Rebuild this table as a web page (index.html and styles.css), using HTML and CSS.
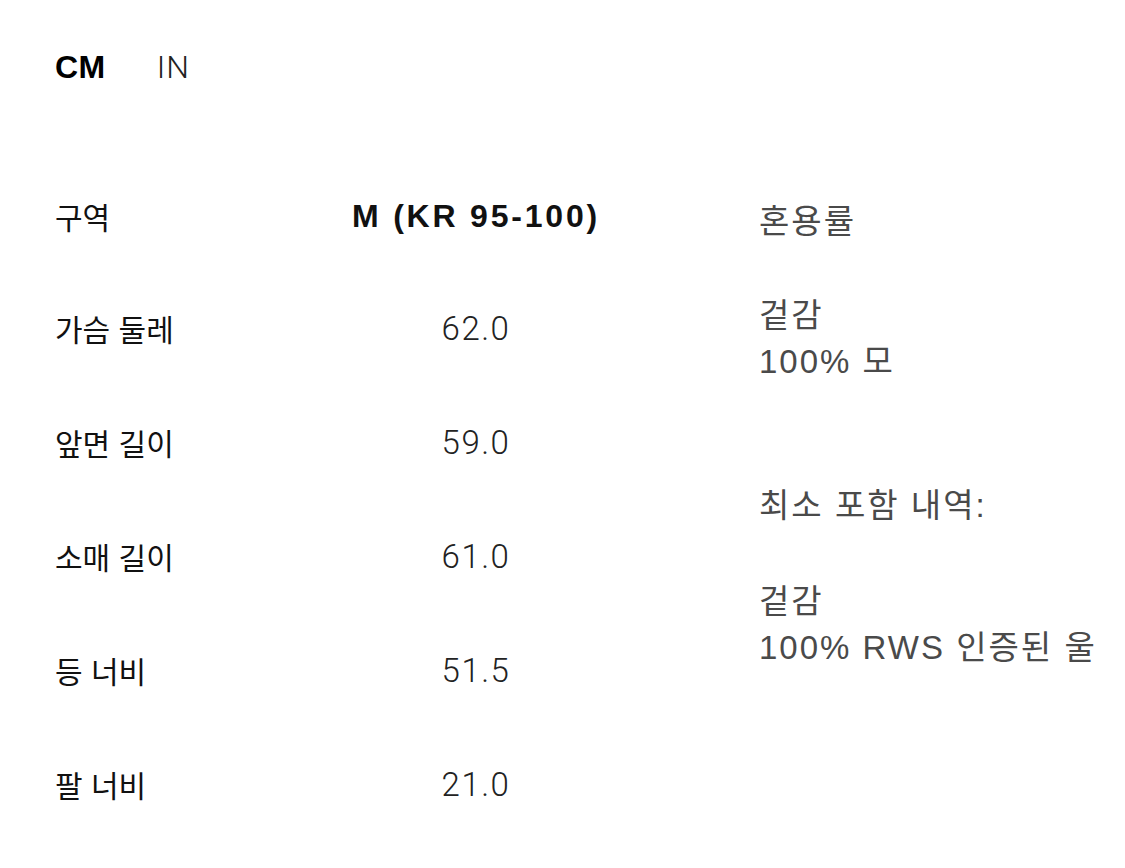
FILE: index.html
```html
<!DOCTYPE html>
<html lang="ko">
<head>
<meta charset="utf-8">
<title>Size guide</title>
<link rel="stylesheet" href="styles.css">
</head>
<body>
<div class="page">
  <div class="units">
    <span class="unit active">CM</span>
    <span class="unit">IN</span>
  </div>
  <div class="main">
    <div class="table">
      <div class="row head">
        <div class="label">구역</div>
        <div class="value size">M (KR 95-100)</div>
      </div>
      <div class="row">
        <div class="label">가슴 둘레</div>
        <div class="value">62.0</div>
      </div>
      <div class="row">
        <div class="label">앞면 길이</div>
        <div class="value">59.0</div>
      </div>
      <div class="row">
        <div class="label">소매 길이</div>
        <div class="value">61.0</div>
      </div>
      <div class="row">
        <div class="label">등 너비</div>
        <div class="value">51.5</div>
      </div>
      <div class="row">
        <div class="label">팔 너비</div>
        <div class="value">21.0</div>
      </div>
    </div>
    <div class="composition">
      <div class="line title">혼용률</div>
      <div class="group g1">
        <div class="line">겉감</div>
        <div class="line">100% 모</div>
      </div>
      <div class="line subtitle">최소 포함 내역:</div>
      <div class="group g2">
        <div class="line">겉감</div>
        <div class="line">100% RWS 인증된 울</div>
      </div>
    </div>
  </div>
</div>
</body>
</html>
```
FILE: styles.css
```css
html, body {
  margin: 0;
  padding: 0;
  background: #ffffff;
}
body {
  font-family: "Liberation Sans", "Noto Sans CJK KR", sans-serif;
  color: #111;
}
.page {
  padding: 47px 0 0 55px;
}
.units {
  display: flex;
  gap: 51px;
  height: 40px;
  line-height: 40px;
  font-size: 32px;
}
.unit {
  color: #222;
  letter-spacing: 1px;
  font-family: "Roboto", "Liberation Sans", sans-serif;
  font-weight: 300;
}
.unit.active {
  font-family: "Liberation Sans", sans-serif;
  font-weight: 700;
  color: #000;
  letter-spacing: 0.5px;
}
.main {
  display: flex;
  margin-top: 74px;
}
.table {
  display: flex;
  flex-direction: column;
}
.row {
  display: grid;
  grid-template-columns: 296px 250px;
  height: 114px;
  align-items: center;
}
.row.head {
  height: 110px;
}
.label {
  font-size: 30px;
  letter-spacing: 0px;
  color: #111;
}
.value {
  text-align: center;
  font-size: 33px;
  letter-spacing: 1.5px;
  color: #222;
  font-family: "Roboto", "Liberation Sans", sans-serif;
  font-weight: 300;
}
.value.size {
  font-family: "Liberation Sans", sans-serif;
  font-weight: 700;
  font-size: 32px;
  letter-spacing: 2.8px;
  color: #111;
}
.composition {
  margin-left: 158px;
  padding-top: 38px;
  color: #4a4a4a;
  font-size: 33px;
  letter-spacing: 2px;
}
.line {
  line-height: 46px;
}
.g1 {
  margin-top: 48px;
}
.subtitle {
  margin-top: 98px;
}
.g2 {
  margin-top: 50px;
}
```
